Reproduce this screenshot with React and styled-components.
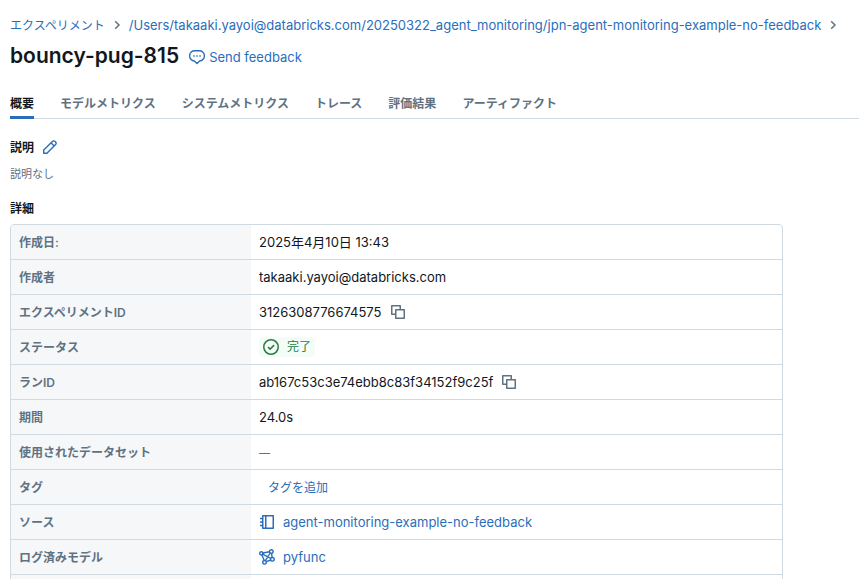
import React from 'react';
import styled, { createGlobalStyle, css, ThemeProvider } from 'styled-components';

const theme = {
  text: '#11171c',
  secondary: '#5f7281',
  link: '#2a6ebb',
  border: '#d1d9e1',
  label: '#f6f7f9',
  success: '#277c43',
  successBackground: '#f3fcf6',
  bold: 600,
};

const GlobalStyle = createGlobalStyle`
  *, *::before, *::after {
    box-sizing: border-box;
  }

  body {
    margin: 0;
    background: #fff;
    color: ${theme.text};
    font-family: Inter, "Noto Sans CJK JP", sans-serif;
    font-size: 13px;
    line-height: 20px;
  }

  button {
    padding: 0;
    border: 0;
    background: none;
    font: inherit;
    cursor: pointer;
  }
`;

const StyledWrapper = styled.div`
  height: 100vh;
  padding: 15px 0 0 10px;
  overflow: hidden;
`;

const StyledIcon = styled.svg`
  flex: none;
  display: block;
  width: ${({ $size = 16 }) => $size}px;
  height: ${({ $size = 16 }) => $size}px;
`;

const StyledLink = styled.a`
  display: inline-flex;
  align-items: center;
  gap: ${({ $gap = 0 }) => $gap}px;
  color: ${({ theme }) => theme.link};
  text-decoration: none;
  vertical-align: top;
  white-space: nowrap;
`;

const StyledBreadcrumb = styled.nav`
  display: flex;
  align-items: center;
  gap: 4px;
  color: ${({ theme }) => theme.secondary};
`;

const StyledJapaneseLink = styled(StyledLink)`
  padding-top: 2px;
  font-size: 12px;
  line-height: 18px;
`;

const StyledHeader = styled.header`
  display: flex;
  align-items: center;
  gap: 10px;
  margin-top: 5px;
`;

const StyledFeedbackLink = styled(StyledLink)`
  padding-top: 2px;
`;

const StyledTitle = styled.h1`
  margin: 0;
  font-size: 21px;
  font-weight: ${({ theme }) => theme.bold};
  line-height: 32px;
`;

const StyledTabs = styled.div`
  display: flex;
  gap: 26px;
  margin-top: 21px;
  border-bottom: 1px solid ${({ theme }) => theme.border};
`;

const StyledTab = styled.button`
  height: 26px;
  margin-bottom: -1px;
  padding-bottom: 1px;
  border-bottom: 3px solid transparent;
  color: ${({ theme }) => theme.secondary};
  font-size: 12px;
  font-weight: ${({ theme }) => theme.bold};
  line-height: 20px;
  white-space: nowrap;

  ${({ $active }) =>
    $active &&
    css`
      border-bottom-color: ${({ theme }) => theme.link};
      color: ${({ theme }) => theme.text};
    `}
`;

const StyledContent = styled.main`
  padding: 19px 76px 0 0;
`;

const StyledHeading = styled.h2`
  display: flex;
  align-items: flex-start;
  gap: 8px;
  margin: 0;
  font-size: 12px;
  font-weight: ${({ theme }) => theme.bold};
`;

const StyledIconButton = styled.button`
  color: ${({ $link, theme }) => ($link ? theme.link : theme.secondary)};
`;

const StyledEditButton = styled(StyledIconButton)`
  padding-top: 1px;
`;

const StyledDescription = styled.p`
  margin: 6px 0 15px;
  color: ${({ theme }) => theme.secondary};
  font-size: 11px;
`;

const StyledTable = styled.table`
  width: 100%;
  margin-top: 5px;
  border: 1px solid ${({ theme }) => theme.border};
  border-radius: 4px;
  border-collapse: separate;
  border-spacing: 0;
  table-layout: fixed;
  overflow: hidden;
`;

const StyledLabel = styled.th`
  width: 240px;
  height: 35px;
  padding: 2px 8px 0;
  border-bottom: 1px solid ${({ theme }) => theme.border};
  background: ${({ theme }) => theme.label};
  color: ${({ theme }) => theme.secondary};
  font-size: 12px;
  font-weight: ${({ theme }) => theme.bold};
  text-align: left;
`;

const StyledValue = styled.td`
  height: 35px;
  padding: 0 8px;
  border-bottom: 1px solid ${({ theme }) => theme.border};
`;

const StyledInline = styled.div`
  display: flex;
  align-items: center;
  gap: 8px;
`;

const StyledStatus = styled.span`
  display: inline-flex;
  align-items: center;
  gap: 8px;
  padding: 0 4px;
  border-radius: 4px;
  background: ${({ theme }) => theme.successBackground};
  color: ${({ theme }) => theme.success};
  font-size: 12px;
  vertical-align: top;
`;

const StyledTagButton = styled.button`
  padding: 0 9px;
  color: ${({ theme }) => theme.link};
  font-size: 12px;
`;

const StyledMuted = styled.span`
  color: ${({ theme }) => theme.secondary};
  font-size: 11px;
`;

const ChevronIcon = () => (
  <StyledIcon viewBox="0 0 16 16" fill="none" stroke="currentColor" strokeWidth="1.5" aria-hidden>
    <path d="m6.2 4.2 3.8 3.8-3.8 3.8" />
  </StyledIcon>
);

const SpeechIcon = () => (
  <StyledIcon viewBox="0 0 16 16" fill="none" stroke="currentColor" strokeWidth="1.4" aria-hidden>
    <path
      d="M6 1.8h4a5.1 5.1 0 0 1 .6 10.2L8 14.5 5.4 12A5.1 5.1 0 0 1 6 1.8Z"
      strokeLinejoin="round"
    />
    <path d="M4.3 7h1.4M7.3 7h1.4M10.3 7h1.4" />
  </StyledIcon>
);

const PencilIcon = () => (
  <StyledIcon viewBox="0 0 16 16" fill="none" stroke="currentColor" strokeWidth="1.4" aria-hidden>
    <path
      d="M1.7 14.3v-3.2l8.7-8.7a1.9 1.9 0 0 1 2.7 0l.5.5a1.9 1.9 0 0 1 0 2.7l-8.7 8.7ZM9 3.8 12.2 7"
      strokeLinejoin="round"
    />
  </StyledIcon>
);

const CopyIcon = () => (
  <StyledIcon viewBox="0 0 16 16" fill="none" stroke="currentColor" strokeWidth="1.5" aria-hidden>
    <path d="M5.5 10.25H1.75v-8.5h8.5V5.5" strokeLinejoin="round" />
    <path d="M5.75 5.75h8.5v8.5h-8.5Z" strokeLinejoin="round" />
  </StyledIcon>
);

const CheckCircleIcon = () => (
  <StyledIcon viewBox="0 0 16 16" fill="none" stroke="currentColor" strokeWidth="1.5" aria-hidden>
    <circle cx="8" cy="8" r="7.25" />
    <path d="m5 8 2.1 2.1 4-4" />
  </StyledIcon>
);

const NotebookIcon = () => (
  <StyledIcon viewBox="0 0 16 16" fill="none" stroke="currentColor" strokeWidth="1.5" aria-hidden>
    <path d="M3.75 1.75h10.5v12.5H3.75ZM6.75 1.75v12.5" strokeLinejoin="round" />
    <path d="M1 4.5h2.75M1 8h2.75M1 11.5h2.75" />
  </StyledIcon>
);

const ModelsIcon = () => (
  <StyledIcon viewBox="0 0 16 16" fill="none" stroke="currentColor" strokeWidth="1.4" aria-hidden>
    <circle cx="2.3" cy="4.3" r="1.6" />
    <circle cx="12.3" cy="2.5" r="1.8" />
    <circle cx="13.4" cy="10.3" r="1.8" />
    <circle cx="5.5" cy="13.3" r="1.8" />
    <path d="m3.9 4 6.6-1.2M12.5 4.3l.7 4.2M11.8 11 7.3 12.7M5.2 11.5 2.8 5.8M3.6 5.2l8.2 4.2M11.2 4 6.4 11.7" />
  </StyledIcon>
);

const CopyableText = ({ children, label }) => (
  <StyledInline>
    <span>{children}</span>
    <StyledIconButton type="button" aria-label={label}>
      <CopyIcon />
    </StyledIconButton>
  </StyledInline>
);

const tabs = [
  '概要',
  'モデルメトリクス',
  'システムメトリクス',
  'トレース',
  '評価結果',
  'アーティファクト',
];

const details = [
  ['作成日:', '2025年4月10日 13:43'],
  ['作成者', 'takaaki.yayoi@databricks.com'],
  ['エクスペリメントID', <CopyableText label="エクスペリメントIDをコピー">3126308776674575</CopyableText>],
  [
    'ステータス',
    <StyledStatus>
      <CheckCircleIcon />
      完了
    </StyledStatus>,
  ],
  ['ランID', <CopyableText label="ランIDをコピー">ab167c53c3e74ebb8c83f34152f9c25f</CopyableText>],
  ['期間', '24.0s'],
  ['使用されたデータセット', <StyledMuted>—</StyledMuted>],
  ['タグ', <StyledTagButton type="button">タグを追加</StyledTagButton>],
  [
    'ソース',
    <StyledLink href="#source" $gap={8}>
      <NotebookIcon />
      agent-monitoring-example-no-feedback
    </StyledLink>,
  ],
  [
    'ログ済みモデル',
    <StyledLink href="#model" $gap={8}>
      <ModelsIcon />
      pyfunc
    </StyledLink>,
  ],
  ['', ''],
];

const App = () => (
  <ThemeProvider theme={theme}>
    <GlobalStyle />
    <StyledWrapper>
      <StyledBreadcrumb>
        <StyledJapaneseLink href="#experiments">エクスペリメント</StyledJapaneseLink>
        <ChevronIcon />
        <StyledLink href="#experiment">
          /Users/takaaki.yayoi@databricks.com/20250322_agent_monitoring/jpn-agent-monitoring-example-no-feedback
        </StyledLink>
        <ChevronIcon />
      </StyledBreadcrumb>
      <StyledHeader>
        <StyledTitle>bouncy-pug-815</StyledTitle>
        <StyledFeedbackLink href="#feedback" $gap={4}>
          <SpeechIcon />
          Send feedback
        </StyledFeedbackLink>
      </StyledHeader>
      <StyledTabs role="tablist">
        {tabs.map((tab, index) => (
          <StyledTab key={tab} type="button" role="tab" aria-selected={index === 0} $active={index === 0}>
            {tab}
          </StyledTab>
        ))}
      </StyledTabs>
      <StyledContent>
        <StyledHeading>
          説明
          <StyledEditButton type="button" aria-label="説明を編集" $link>
            <PencilIcon />
          </StyledEditButton>
        </StyledHeading>
        <StyledDescription>説明なし</StyledDescription>
        <StyledHeading>詳細</StyledHeading>
        <StyledTable>
          <tbody>
            {details.map(([label, value]) => (
              <tr key={label}>
                <StyledLabel scope="row">{label}</StyledLabel>
                <StyledValue>{value}</StyledValue>
              </tr>
            ))}
          </tbody>
        </StyledTable>
      </StyledContent>
    </StyledWrapper>
  </ThemeProvider>
);

export default App;
